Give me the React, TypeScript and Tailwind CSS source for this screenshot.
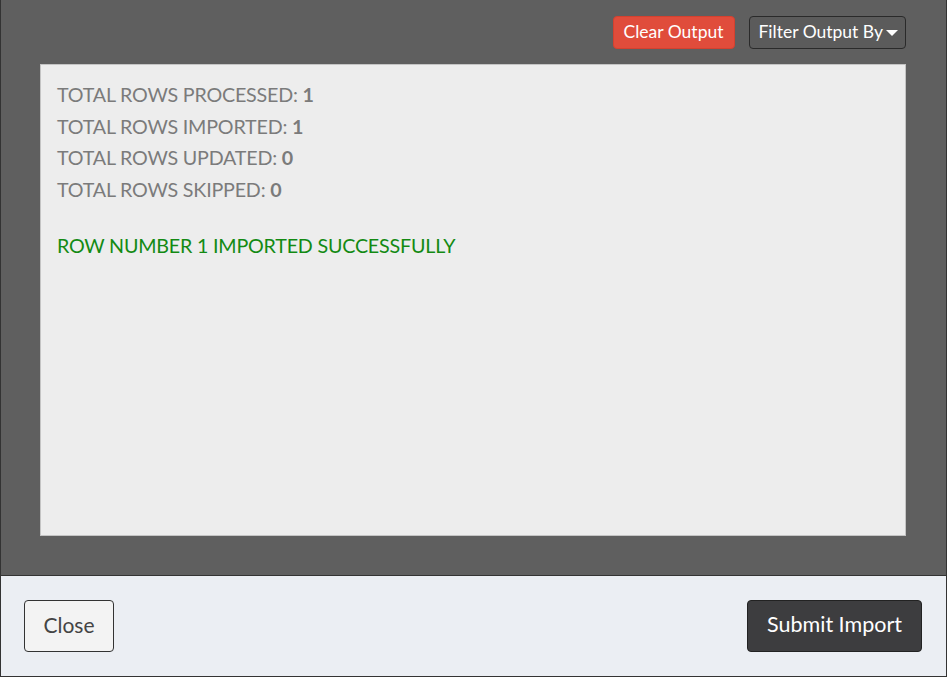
import React from 'react';

const stats = [
  { label: 'TOTAL ROWS PROCESSED', value: '1' },
  { label: 'TOTAL ROWS IMPORTED', value: '1' },
  { label: 'TOTAL ROWS UPDATED', value: '0' },
  { label: 'TOTAL ROWS SKIPPED', value: '0' },
];

const App: React.FC = () => {
  return (
    <div
      className="w-[947px] h-[677px] flex flex-col border-x border-b border-[#333] bg-[#5f5f5f]"
      style={{ fontFamily: 'Lato, "Noto Sans", sans-serif' }}
    >
      <div className="flex-1 flex flex-col pt-4 pl-[39px] pr-[40px] pb-[39px]">
        <div className="flex justify-end gap-[14px] h-[33px]">
          <button className="h-[33px] px-[10px] pb-[1px] rounded-[4px] bg-[#e04c3b] border border-[#d4412f] text-white text-[17.5px] leading-none">
            Clear Output
          </button>
          <button className="h-[33px] pl-[9px] pr-[7px] pb-[1px] rounded-[4px] bg-[#5b5b5b] border border-[#2a2a2a] text-white text-[17.5px] leading-none flex items-center gap-[3px]">
            <span>Filter Output By</span>
            <svg width="12" height="7" viewBox="0 0 12 7" className="mt-[2px]">
              <path d="M0 0 L12 0 L6 6 Z" fill="#fff" />
            </svg>
          </button>
        </div>
        <div className="mt-[15px] flex-1 bg-[#ededed] border border-[#c4c4c4] px-4 pt-[14px] text-[19.7px] tracking-[-0.2px] leading-[31.5px]">
          {stats.map((s) => (
            <div key={s.label} className="text-[#7b7b7b]">
              {s.label}: <span className="font-bold">{s.value}</span>
            </div>
          ))}
          <div className="mt-[25px] text-[#138a13]">ROW NUMBER 1 IMPORTED SUCCESSFULLY</div>
        </div>
      </div>
      <div className="h-[101px] border-t border-[#333] bg-[#ebeef3] flex items-center justify-between pl-[23px] pr-[24px]">
        <button className="w-[90px] h-[52px] pb-[3px] rounded-[4px] bg-[#f3f3f3] border border-[#333] text-[#444] text-[21px]">
          Close
        </button>
        <button className="w-[175px] h-[52px] pb-[3px] rounded-[4px] bg-[#3d3d3f] border border-[#222] text-white text-[21.5px]">
          Submit Import
        </button>
      </div>
    </div>
  );
};

export default App;
